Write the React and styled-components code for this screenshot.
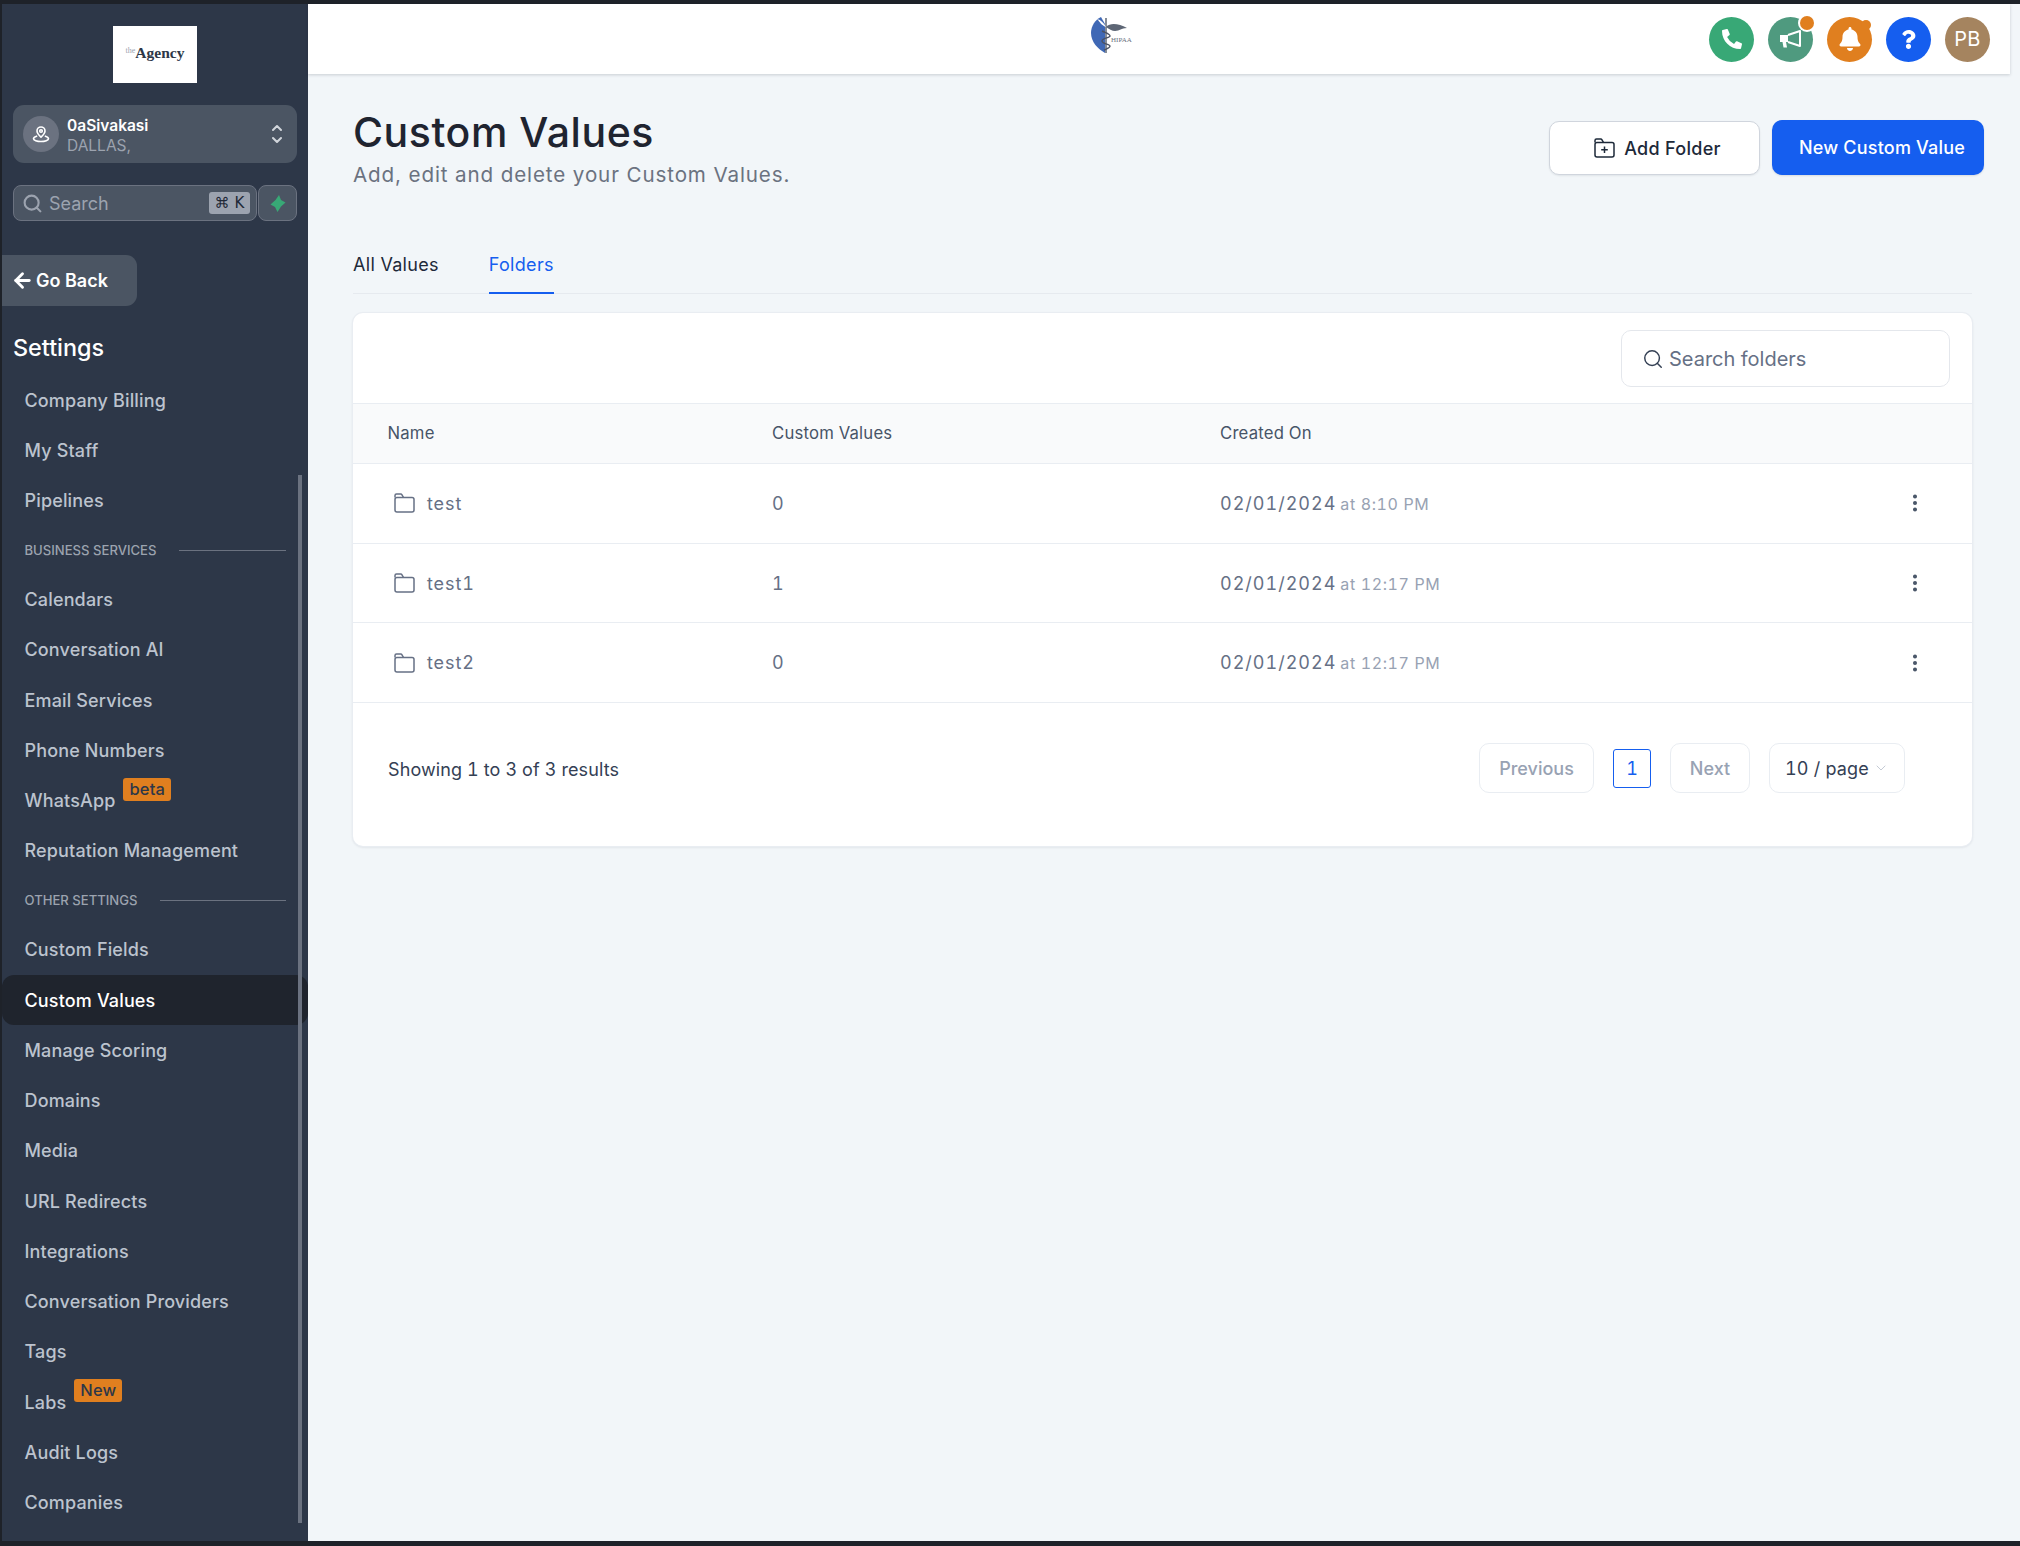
import React from 'react';
import styled, { createGlobalStyle } from 'styled-components';
import { ArrowLeft, ChevronDown, EllipsisVertical, Search } from 'lucide-react';
import { FaBell, FaPhoneAlt, FaQuestion } from 'react-icons/fa';

const GlobalStyle = createGlobalStyle`
    html, body {
        margin: 0;
        padding: 0;
        background: #1e2229;
    }
    * {
        box-sizing: border-box;
    }
    body {
        font-family: Inter, "Liberation Sans", sans-serif;
    }
`;

const Frame = styled.div`
    width: 2020px;
    height: 1546px;
    display: flex;
    padding: 4px 0 5px 2px;
    background: #1e2229;
    overflow: hidden;
`;

const Sidebar = styled.aside`
    position: relative;
    width: 306px;
    flex-shrink: 0;
    display: flex;
    flex-direction: column;
    background: #2d3748;
    overflow: hidden;
`;

const LogoBox = styled.div`
    width: 84px;
    height: 57px;
    margin: 22px auto 0;
    padding-bottom: 3px;
    display: flex;
    align-items: center;
    justify-content: center;
    background: #fff;
    color: #2d3748;
    font-family: "Liberation Serif", serif;
    font-weight: 700;
    font-size: 15.5px;
`;

const LogoThe = styled.span`
    font-size: 8px;
    font-weight: 400;
    color: #9ca3af;
    margin-bottom: 5px;
`;

const LocationCard = styled.div`
    height: 58px;
    margin: 22px 11px 0;
    padding: 0 15px 0 10px;
    display: flex;
    align-items: center;
    gap: 8px;
    border-radius: 11px;
    background: #4b5563;
`;

const LocationAvatar = styled.div`
    width: 36px;
    height: 36px;
    border-radius: 50%;
    display: flex;
    align-items: center;
    justify-content: center;
    background: #6b7280;
    flex-shrink: 0;
`;

const LocationText = styled.div`
    flex: 1;
    min-width: 0;
    padding-top: 4px;
`;

const LocationName = styled.div`
    font-size: 15.5px;
    line-height: 19px;
    font-weight: 600;
    color: #fff;
`;

const LocationSub = styled.div`
    font-size: 15.5px;
    line-height: 21px;
    color: #9ca3af;
`;

const SearchRow = styled.div`
    height: 36px;
    margin: 22px 11px 0;
    display: flex;
    gap: 1px;
`;

const SearchBox = styled.div`
    flex: 1;
    display: flex;
    align-items: center;
    padding: 0 6px 0 8px;
    gap: 6px;
    border: 1px solid #6b7280;
    border-radius: 8px;
    background: #4b5563;
    color: #9ca3af;
    font-size: 18px;
`;

const SearchLabel = styled.span`
    flex: 1;
`;

const Kbd = styled.span`
    width: 41px;
    height: 22px;
    display: flex;
    align-items: center;
    justify-content: center;
    gap: 5px;
    border-radius: 3px;
    background: #9ca3af;
    color: #1f2937;
    font-size: 15px;
    font-family: "DejaVu Sans", Inter, sans-serif;
`;

const BoltButton = styled.div`
    width: 39px;
    display: flex;
    align-items: center;
    justify-content: center;
    border: 1px solid #6b7280;
    border-radius: 8px;
    background: #4b5563;
`;

const GoBack = styled.div`
    width: 135px;
    height: 51px;
    margin-top: 34px;
    padding-left: 9px;
    display: flex;
    align-items: center;
    gap: 2px;
    border-radius: 0 11px 11px 0;
    background: #4b5563;
    color: #fff;
    font-size: 18px;
    font-weight: 600;
`;

const SettingsTitle = styled.h2`
    margin: 27px 0 12px 11px;
    font-size: 23.4px;
    line-height: 30px;
    font-weight: 500;
    color: #fff;
`;

const NavItem = styled.div`
    height: 50.25px;
    flex-shrink: 0;
    display: flex;
    align-items: center;
    gap: 8px;
    padding-left: 22.5px;
    font-size: 18px;
    font-weight: 500;
    letter-spacing: 0.15px;
    border-radius: 12px;
    color: ${(p) => (p.$active ? '#fff' : '#bcc3ce')};
    background: ${(p) => (p.$active ? '#1f242d' : 'transparent')};
`;

const NavSection = styled.div`
    height: 48.7px;
    flex-shrink: 0;
    display: flex;
    align-items: center;
    gap: 23px;
    padding: 0 22px 0 22.5px;
    font-size: 13.1px;
    font-weight: 500;
    color: #9ca3af;

    &::after {
        content: '';
        flex: 1;
        height: 1px;
        background: #6b7280;
    }
`;

const NavBadge = styled.span`
    align-self: flex-start;
    margin-top: ${(p) => p.$top}px;
    padding: 0 6px;
    height: 23px;
    line-height: 22px;
    border-radius: 3px;
    background: #e07f1f;
    color: #2d3748;
    font-size: 16.5px;
    font-weight: 500;
`;

const ScrollThumb = styled.div`
    position: absolute;
    top: 471px;
    bottom: 18px;
    right: 6px;
    width: 4px;
    background: #6b7280;
`;

const Main = styled.main`
    flex: 1;
    min-width: 0;
    display: flex;
    flex-direction: column;
    background: #f2f6f9;
`;

const TopBar = styled.header`
    height: 70px;
    flex-shrink: 0;
    margin-right: 10px;
    padding-right: 20px;
    display: flex;
    align-items: center;
    justify-content: flex-end;
    gap: 14px;
    position: relative;
    background: #fff;
    box-shadow: 0 1px 3px rgba(16, 24, 40, 0.18);
`;

const TopLogo = styled.div`
    position: absolute;
    left: 780px;
    top: 11px;
    width: 46px;
    height: 40px;
`;

const RoundButton = styled.div`
    position: relative;
    width: 45px;
    height: 45px;
    border-radius: 50%;
    display: flex;
    align-items: center;
    justify-content: center;
    background: ${(p) => p.$bg};
    color: #fff;
    font-size: ${(p) => p.$size || 20}px;
`;

const Dot = styled.span`
    position: absolute;
    top: ${(p) => p.$top}px;
    right: ${(p) => p.$right}px;
    width: ${(p) => p.$d}px;
    height: ${(p) => p.$d}px;
    border-radius: 50%;
    background: #e07f1f;
    box-shadow: ${(p) => (p.$ring ? '0 0 0 2px #fff' : 'none')};
`;

const Content = styled.div`
    flex: 1;
    padding: 35px 48px 0 45px;
`;

const PageHead = styled.div`
    display: flex;
    justify-content: space-between;
    align-items: flex-start;
    margin-right: -12px;
`;

const PageTitle = styled.h1`
    margin: 0;
    font-size: 41px;
    line-height: 46px;
    font-weight: 500;
    letter-spacing: 0.55px;
    color: #1f2430;
`;

const PageSub = styled.p`
    margin: 6px 0 0;
    font-size: 20.6px;
    line-height: 28px;
    letter-spacing: 0.88px;
    color: #6b7280;
`;

const HeadActions = styled.div`
    display: flex;
    align-items: flex-end;
    gap: 12px;
    margin-top: 11px;
`;

const OutlineButton = styled.button`
    width: 211px;
    height: 54px;
    padding: 0 0 0 6px;
    display: flex;
    align-items: center;
    justify-content: center;
    gap: 9px;
    border: 1px solid #d0d5dd;
    border-radius: 10px;
    background: #fff;
    box-shadow: 0 1px 2px rgba(16, 24, 40, 0.08);
    color: #1d2939;
    font: 500 18px Inter, sans-serif;
    letter-spacing: 0.3px;
`;

const PrimaryButton = styled.button`
    width: 212px;
    height: 55px;
    padding: 0 0 0 8px;
    border: none;
    border-radius: 10px;
    background: #155eef;
    box-shadow: 0 1px 2px rgba(16, 24, 40, 0.12);
    color: #fff;
    font: 500 18px Inter, sans-serif;
    letter-spacing: 0.2px;
`;

const Tabs = styled.div`
    height: 55px;
    margin-top: 50px;
    display: flex;
    gap: 50px;
    border-bottom: 1px solid #e6eaef;
`;

const Tab = styled.div`
    height: 55px;
    padding-top: 13px;
    font-size: 18px;
    line-height: 26px;
    letter-spacing: 0.3px;
    color: ${(p) => (p.$active ? '#155eef' : '#1d2939')};
    border-bottom: ${(p) => (p.$active ? '2.5px solid #155eef' : 'none')};
`;

const Card = styled.section`
    height: 533px;
    margin-top: 19px;
    border-radius: 10px;
    background: #fff;
    box-shadow: 0 0 0 1px #e9edf2, 0 1px 3px rgba(16, 24, 40, 0.14);
    overflow: hidden;
    font-variant-numeric: tabular-nums;
`;

const Toolbar = styled.div`
    height: 90px;
    padding-right: 22px;
    display: flex;
    align-items: center;
    justify-content: flex-end;
`;

const SearchInput = styled.div`
    width: 329px;
    height: 57px;
    padding: 2px 0 0 20px;
    display: flex;
    align-items: center;
    gap: 5px;
    border: 1.5px solid #e4e7ec;
    border-radius: 10px;
    color: #667085;
    font-size: 20px;
`;

const TableRow = styled.div`
    display: grid;
    grid-template-columns: 419px 448px 1fr 68px;
    align-items: center;
    height: 79.7px;
    border-bottom: 1px solid #e9edf2;
    color: #667085;
    font-size: 18px;
`;

const TableHead = styled(TableRow)`
    height: 61px;
    padding-bottom: 1px;
    background: #f9fafb;
    border-top: 1px solid #e9edf2;
    color: #475467;
    font-size: 16.7px;
    letter-spacing: 0.2px;
`;

const NameCell = styled.div`
    display: flex;
    align-items: center;
    gap: 12px;
    padding-left: ${(p) => p.$pad}px;
`;

const FolderName = styled.span`
    letter-spacing: 0.9px;
`;

const DateMain = styled.span`
    letter-spacing: 1px;
`;

const DateTime = styled.span`
    margin-left: 4px;
    color: #98a2b3;
    font-size: 16px;
    letter-spacing: 0.6px;
`;

const MoreCell = styled.div`
    display: flex;
    color: #475467;
`;

const Footer = styled.div`
    padding: 40px 67px 51px 35px;
    display: flex;
    align-items: center;
    justify-content: space-between;
`;

const Showing = styled.span`
    padding-top: 3px;
    font-size: 18px;
    letter-spacing: 0.1px;
    color: #344054;
`;

const Pager = styled.div`
    display: flex;
    align-items: center;
    gap: 19px;
`;

const PagerButton = styled.div`
    width: ${(p) => p.$w}px;
    height: 50px;
    display: flex;
    align-items: center;
    justify-content: center;
    border: 1.5px solid #e9edf2;
    border-radius: 10px;
    color: #98a2b3;
    font-size: 18px;
    font-weight: 500;
`;

const PageNumber = styled.div`
    width: 38px;
    height: 39px;
    display: flex;
    align-items: center;
    justify-content: center;
    border: 1.5px solid #155eef;
    border-radius: 3px;
    color: #155eef;
    font-size: 18px;
`;

const PageSize = styled(PagerButton)`
    gap: 4px;
    color: #344054;
    font-weight: 400;
    letter-spacing: 0.2px;
`;

const AvatarText = styled.span`
    font-size: 20px;
    letter-spacing: 0.3px;
`;

const navTop = ['Company Billing', 'My Staff', 'Pipelines'];
const navBusiness = ['Calendars', 'Conversation AI', 'Email Services', 'Phone Numbers'];
const navOther = ['Custom Fields', 'Custom Values', 'Manage Scoring', 'Domains', 'Media', 'URL Redirects', 'Integrations', 'Conversation Providers', 'Tags'];

const folders = [
    { name: 'test', count: 0, time: '8:10 PM' },
    { name: 'test1', count: 1, time: '12:17 PM' },
    { name: 'test2', count: 0, time: '12:17 PM' },
];

const PinIcon = () => (
    <svg width="20" height="20" viewBox="0 0 20 20" fill="none" stroke="#fff" strokeWidth="1.6" strokeLinejoin="round">
        <path d="M10 13.2c2.4-2.3 4-4.1 4-6.2a4 4 0 0 0-8 0c0 2.1 1.6 3.9 4 6.2z" />
        <circle cx="10" cy="7" r="1.3" />
        <path d="M6.2 12c-2.2.6-3.7 1.5-3.7 2.7 0 1.5 3.4 2.8 7.5 2.8s7.5-1.3 7.5-2.8c0-1.2-1.5-2.1-3.7-2.7" />
    </svg>
);

const UpDownIcon = () => (
    <svg width="10" height="20" viewBox="0 0 10 20" fill="none" stroke="#d1d5db" strokeWidth="2" strokeLinecap="round" strokeLinejoin="round">
        <path d="M1 6l4-4 4 4" />
        <path d="M1 14l4 4 4-4" />
    </svg>
);

const BoltIcon = () => (
    <svg width="16" height="17" viewBox="0 0 16 17">
        <path d="M9 0l2 5 4.5 2.5-4.5 4L7.5 17 5 12 .5 9.5 5.5 5z" fill="#38a876" />
    </svg>
);

const FolderIcon = ({ color = '#667085', plus }) => (
    <svg width="21" height="20" viewBox="0 0 21 20" fill="none" stroke={color} strokeWidth="1.5" strokeLinejoin="round">
        <path d="M1 4.5V2.5A1.5 1.5 0 0 1 2.5 1h4.2c.6 0 1 .3 1.3.8L9.5 4.5" />
        <rect x="1" y="4.5" width="19" height="14.5" rx="2" />
        {plus && <path d="M10.5 8.5v6.5M7.2 11.8h6.6" />}
    </svg>
);

const MegaphoneIcon = () => (
    <svg width="22" height="18" viewBox="0 0 22 18" fill="none">
        <path d="M0 5h8v7H6l1 5.5H3.5L2.5 12H0z" fill="#fff" />
        <path d="M8 5l12-4v15L8 12" stroke="#fff" strokeWidth="2" strokeLinejoin="round" />
    </svg>
);

const HipaaLogo = () => (
    <svg width="46" height="40" viewBox="0 0 46 40">
        <path d="M13 2C7 5 3 11 3 18c0 9 7 16 14 20V9z" fill="#3f68b5" />
        <path d="M18 3v35" stroke="#5d6675" strokeWidth="1.5" />
        <path d="M18 12c5-5 13-3 21 1-6 0-7 3-12 3-3 0-6-2-9-4z" fill="#5d6675" />
        <path d="M18 12c-2-4-5-7-9-8 3 3 4 6 9 8z" fill="#fff" />
        <path d="M14 16c4 2 8 3 8 5s-8 2-8 5 8 3 8 5-4 3-6 4" stroke="#4a5264" strokeWidth="1.4" fill="none" />
        <text x="23" y="27" fontSize="7" fontFamily="Liberation Serif, serif" fill="#6b7280">HIPAA</text>
    </svg>
);

const App = () => {
    return (
        <Frame>
            <GlobalStyle />
            <Sidebar>
                <LogoBox><LogoThe>the</LogoThe>Agency</LogoBox>
                <LocationCard>
                    <LocationAvatar><PinIcon /></LocationAvatar>
                    <LocationText>
                        <LocationName>0aSivakasi</LocationName>
                        <LocationSub>DALLAS,</LocationSub>
                    </LocationText>
                    <UpDownIcon />
                </LocationCard>
                <SearchRow>
                    <SearchBox>
                        <Search size={21} strokeWidth={2.4} />
                        <SearchLabel>Search</SearchLabel>
                        <Kbd><span>⌘</span><span>K</span></Kbd>
                    </SearchBox>
                    <BoltButton><BoltIcon /></BoltButton>
                </SearchRow>
                <GoBack><ArrowLeft size={23} strokeWidth={3} />Go Back</GoBack>
                <SettingsTitle>Settings</SettingsTitle>
                {navTop.map((item) => <NavItem key={item}>{item}</NavItem>)}
                <NavSection>BUSINESS SERVICES</NavSection>
                {navBusiness.map((item) => <NavItem key={item}>{item}</NavItem>)}
                <NavItem>WhatsApp<NavBadge $top={3}>beta</NavBadge></NavItem>
                <NavItem>Reputation Management</NavItem>
                <NavSection>OTHER SETTINGS</NavSection>
                {navOther.map((item) => (
                    <NavItem key={item} $active={item === 'Custom Values'}>{item}</NavItem>
                ))}
                <NavItem>Labs<NavBadge $top={2}>New</NavBadge></NavItem>
                <NavItem>Audit Logs</NavItem>
                <NavItem>Companies</NavItem>
                <ScrollThumb />
            </Sidebar>
            <Main>
                <TopBar>
                    <TopLogo><HipaaLogo /></TopLogo>
                    <RoundButton $bg="#38a876"><FaPhoneAlt /></RoundButton>
                    <RoundButton $bg="#4f9a7f">
                        <MegaphoneIcon />
                        <Dot $top={-1} $right={-1} $d={14} $ring />
                    </RoundButton>
                    <RoundButton $bg="#e07f1f" $size={24}>
                        <FaBell />
                        <Dot $top={3} $right={1} $d={10} />
                    </RoundButton>
                    <RoundButton $bg="#155eef" $size={19}><FaQuestion /></RoundButton>
                    <RoundButton $bg="#a5845f"><AvatarText>PB</AvatarText></RoundButton>
                </TopBar>
                <Content>
                    <PageHead>
                        <div>
                            <PageTitle>Custom Values</PageTitle>
                            <PageSub>Add, edit and delete your Custom Values.</PageSub>
                        </div>
                        <HeadActions>
                            <OutlineButton><FolderIcon color="#1d2939" plus />Add Folder</OutlineButton>
                            <PrimaryButton>New Custom Value</PrimaryButton>
                        </HeadActions>
                    </PageHead>
                    <Tabs>
                        <Tab>All Values</Tab>
                        <Tab $active>Folders</Tab>
                    </Tabs>
                    <Card>
                        <Toolbar>
                            <SearchInput>
                                <Search size={22} color="#344054" strokeWidth={1.6} />
                                Search folders
                            </SearchInput>
                        </Toolbar>
                        <TableHead>
                            <NameCell $pad={34.5}>Name</NameCell>
                            <div>Custom Values</div>
                            <div>Created On</div>
                        </TableHead>
                        {folders.map((folder) => (
                            <TableRow key={folder.name}>
                                <NameCell $pad={41}><FolderIcon /><FolderName>{folder.name}</FolderName></NameCell>
                                <div>{folder.count}</div>
                                <div>
                                    <DateMain>02/01/2024</DateMain>
                                    <DateTime>at {folder.time}</DateTime>
                                </div>
                                <MoreCell><EllipsisVertical size={22} strokeWidth={2.4} /></MoreCell>
                            </TableRow>
                        ))}
                        <Footer>
                            <Showing>Showing 1 to 3 of 3 results</Showing>
                            <Pager>
                                <PagerButton $w={115}>Previous</PagerButton>
                                <PageNumber>1</PageNumber>
                                <PagerButton $w={80}>Next</PagerButton>
                                <PageSize $w={136}>10 / page<ChevronDown size={16} color="#c5cbd5" strokeWidth={1.5} /></PageSize>
                            </Pager>
                        </Footer>
                    </Card>
                </Content>
            </Main>
        </Frame>
    );
};

export default App;
